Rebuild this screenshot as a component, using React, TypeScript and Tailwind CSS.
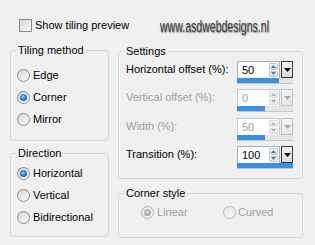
import React from "react";

// small helpers for the classic windows controls
function Radio({ checked, disabled }: { checked?: boolean; disabled?: boolean }) {
  return (
    <span
      className={`w-[13px] h-[13px] shrink-0 rounded-full border flex items-center justify-center bg-linear-to-br ${
        disabled ? "border-[#b5b5b5] from-[#e6e6e6] to-[#f8f8f8]" : "border-[#8a8a8a] from-[#d4d4d4] to-[#fdfdfd]"
      }`}
    >
      {checked && (
        <span
          className={`w-[7px] h-[7px] rounded-full ${
            disabled
              ? "bg-[radial-gradient(circle_at_45%_40%,#d8d8d8,#8c8c8c)]"
              : "bg-[radial-gradient(circle_at_45%_40%,#8fd0ff_0%,#2f7fcf_45%,#0b3f7a_100%)]"
          }`}
        />
      )}
    </span>
  );
}

function RadioRow({
  label,
  checked,
  disabled,
}: {
  label: string;
  checked?: boolean;
  disabled?: boolean;
}) {
  return (
    <div className="h-[22px] flex items-center pl-[6px]">
      <Radio checked={checked} disabled={disabled} />
      <span className={`ml-[3px] ${disabled ? "text-[#a0a0a0]" : ""}`}>{label}</span>
    </div>
  );
}

function Group({
  title,
  className,
  children,
}: {
  title: string;
  className: string;
  children: React.ReactNode;
}) {
  return (
    <fieldset className={`border border-[#d0dae0] rounded-[3px] ${className}`}>
      <legend className="ml-[5px] px-[2px] leading-[13px]">{title}</legend>
      {children}
    </fieldset>
  );
}

function Spin({
  value,
  bar,
  disabled,
}: {
  value: string;
  bar: string;
  disabled?: boolean;
}) {
  const arrow = disabled ? "#b4b4b4" : "#5d7a99";
  return (
    <div className="w-[56px] h-[23px] flex flex-col shrink-0">
      <div className="flex h-[17px]">
        <div
          className={`w-[43px] flex border border-b-0 bg-white ${
            disabled ? "border-[#c9c9c9]" : "border-[#abadb3]"
          }`}
        >
          <span className={`flex-1 pl-[4px] leading-[16px] ${disabled ? "text-[#a0a0a0]" : ""}`}>
            {value}
          </span>
          <div className="w-[10px] flex flex-col gap-[1px] py-[1px] pr-[1px]">
            <div
              className={`flex-1 flex items-center justify-center border rounded-[1px] bg-linear-to-b ${
                disabled ? "border-[#dcdcdc] from-[#f4f4f4] to-[#e8e8e8]" : "border-[#b9c8d8] from-[#f2f6fa] to-[#d6e2ee]"
              }`}
            >
              <svg width="5" height="3" viewBox="0 0 5 3">
                <polygon points="0,3 5,3 2.5,0" fill={arrow} />
              </svg>
            </div>
            <div
              className={`flex-1 flex items-center justify-center border rounded-[1px] bg-linear-to-b ${
                disabled ? "border-[#dcdcdc] from-[#f4f4f4] to-[#e8e8e8]" : "border-[#b9c8d8] from-[#f2f6fa] to-[#d6e2ee]"
              }`}
            >
              <svg width="5" height="3" viewBox="0 0 5 3">
                <polygon points="0,0 5,0 2.5,3" fill={arrow} />
              </svg>
            </div>
          </div>
        </div>
        <div
          className={`ml-[1px] w-[12px] flex items-center justify-center border bg-linear-to-b ${
            disabled ? "border-[#c2c2c2] from-[#f4f4f4] to-[#e6e6e6]" : "border-[#3a3a3a] from-[#f2f2f2] to-[#dcdcdc]"
          }`}
        >
          <svg width="7" height="4" viewBox="0 0 7 4">
            <polygon points="0,0 7,0 3.5,4" fill={disabled ? "#a8a8a8" : "#000"} />
          </svg>
        </div>
      </div>
      <div className="h-[6px] bg-[#e4e4e4] border-b border-[#c6c6c6]">
        <div className={`h-[5px] bg-[#3b8fe0] ${bar}`} />
      </div>
    </div>
  );
}

function SettingRow({
  label,
  value,
  bar,
  disabled,
  className,
}: {
  label: string;
  value: string;
  bar: string;
  disabled?: boolean;
  className?: string;
}) {
  return (
    <div className={`flex pl-[7px] ${className ?? ""}`}>
      <span className={`w-[111px] leading-[17px] ${disabled ? "text-[#a0a0a0]" : ""}`}>{label}</span>
      <Spin value={value} bar={bar} disabled={disabled} />
    </div>
  );
}

export default function App() {
  return (
    <div className="w-[315px] h-[245px] overflow-hidden bg-[#f0f0f0] text-black text-[11px] font-['Liberation_Sans',Arial,sans-serif] pt-[19px] pl-[10px]">
      {/* top row */}
      <div className="flex items-center h-[13px] pl-[9px]">
        <span className="w-[13px] h-[13px] border border-[#8a8a8a] bg-linear-to-br from-[#d6d6d6] to-[#fbfbfb] shrink-0" />
        <span className="ml-[3px] w-[125px] shrink-0">Show tiling preview</span>
        <span className="inline-block shrink-0 mt-[1px] origin-left scale-x-[0.62] text-[17px] leading-[17px] text-[#3a3a3a] whitespace-nowrap [text-shadow:1px_1px_2px_rgba(0,0,0,0.45)]">
          www.asdwebdesigns.nl
        </span>
      </div>

      <div className="flex gap-[9px] mt-[12px]">
        {/* left column */}
        <div className="w-[99px] flex flex-col">
          <Group title="Tiling method" className="h-[97px]">
            <div className="pt-[7px]">
              <RadioRow label="Edge" />
              <RadioRow label="Corner" checked />
              <RadioRow label="Mirror" />
            </div>
          </Group>
          <Group title="Direction" className="h-[90px] mt-[6px]">
            <div className="pt-[2px]">
              <RadioRow label="Horizontal" checked />
              <RadioRow label="Vertical" />
              <RadioRow label="Bidirectional" />
            </div>
          </Group>
        </div>

        {/* right column */}
        <div className="w-[185px] flex flex-col mt-[1px]">
          <Group title="Settings" className="h-[134px]">
            <div className="pt-[3px]">
              <SettingRow label="Horizontal offset (%):" value="50" bar="w-[42px]" />
              <SettingRow label="Vertical offset (%):" value="0" bar="w-[28px]" disabled className="mt-[5px]" />
              <SettingRow label="Width (%):" value="50" bar="w-[28px]" disabled className="mt-[6px]" />
              <SettingRow label="Transition (%):" value="100" bar="w-full" className="mt-[5px]" />
            </div>
          </Group>
          <Group title="Corner style" className="h-[51px] mt-[8px]">
            <div className="pt-[2px] h-[22px] flex items-center pl-[22px] text-[#a0a0a0]">
              <div className="w-[82px] flex items-center">
                <Radio checked disabled />
                <span className="ml-[3px]">Linear</span>
              </div>
              <div className="flex items-center">
                <Radio disabled />
                <span className="ml-[2px]">Curved</span>
              </div>
            </div>
          </Group>
        </div>
      </div>
    </div>
  );
}
